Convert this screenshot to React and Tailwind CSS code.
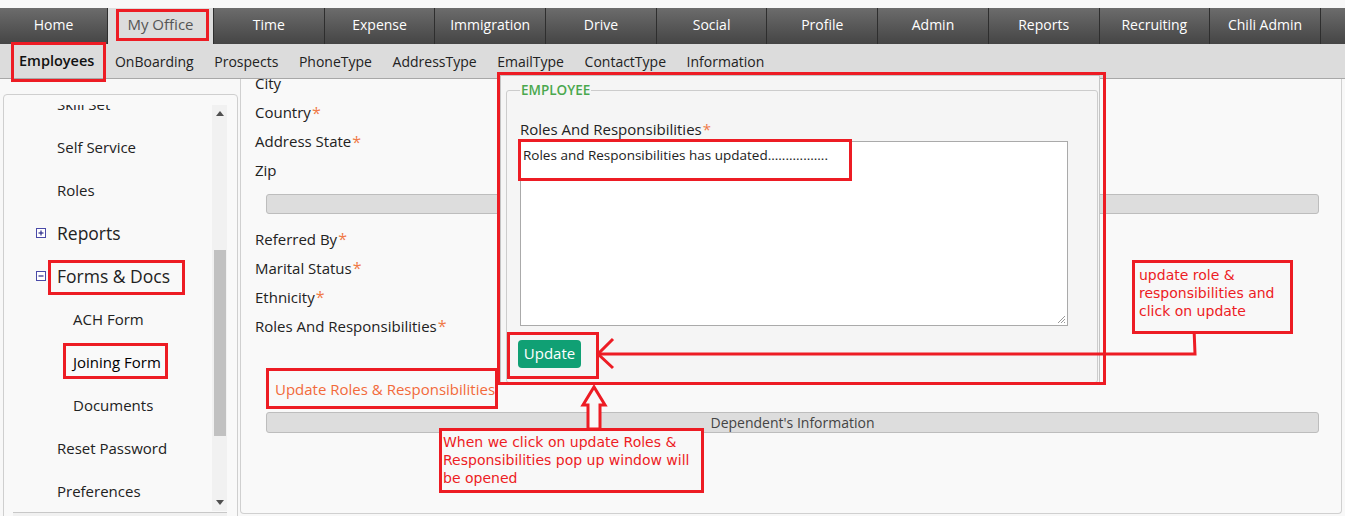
import React from "react";

const tabs = ["Time", "Expense", "Immigration", "Drive", "Social", "Profile", "Admin", "Reports", "Recruiting", "Chili Admin"];
const subs = ["OnBoarding", "Prospects", "PhoneType", "AddressType", "EmailType", "ContactType", "Information"];

function Label({ children, req }) {
  return (
    <div className="h-[29px] flex items-center text-[15px] text-[#222]">
      {children}
      {req && <span className="text-[#f07a48] ml-[1px] text-[16px] leading-none">*</span>}
    </div>
  );
}

function PlusMinus({ minus }) {
  return (
    <svg width="10" height="10" viewBox="0 0 10 10" className="mr-[11px]">
      <rect x="0.5" y="0.5" width="9" height="9" fill="#fff" stroke="#4a4aa8" />
      <line x1="2.5" y1="5" x2="7.5" y2="5" stroke="#2a2a8a" strokeWidth="1.2" />
      {!minus && <line x1="5" y1="2.5" x2="5" y2="7.5" stroke="#2a2a8a" strokeWidth="1.2" />}
    </svg>
  );
}

function SideItem({ children, level = 0, big, icon, active }) {
  const pad = level === 0 ? "pl-[53px]" : level === 1 ? "pl-[32px]" : "pl-[69px]";
  return (
    <div className={`h-[43px] flex items-center ${pad} ${big ? "text-[17.5px]" : "text-[15px]"} ${active ? "text-black" : "text-[#222]"}`}>
      {icon}
      {children}
    </div>
  );
}

function RedBox({ className }) {
  return <div className={`absolute border-[3px] border-[#ed1c24] ${className}`} />;
}

export default function App() {
  return (
    <div className="relative w-[1345px] h-[516px] overflow-hidden bg-[#f8f8f8] font-['Open_Sans',sans-serif]">
      {/* top nav */}
      <div className="pt-[8px]">
        <div className="flex h-[36px] bg-gradient-to-b from-[#6c6c6c] to-[#454545]">
          <div className="w-[108px] shrink-0 border-r border-[#2e2e2e] flex items-center justify-center pb-[3px] text-white text-[14px]">Home</div>
          <div className="w-[106px] shrink-0 border-r border-[#2e2e2e] bg-[#dcdcdc] flex items-center justify-center pb-[3px] text-[#555] text-[15px]">My Office</div>
          {tabs.map((t) => (
            <div key={t} className="w-[110.7px] shrink-0 border-r border-[#2e2e2e] flex items-center justify-center pb-[3px] text-white text-[14px]">{t}</div>
          ))}
        </div>
        {/* sub nav */}
        <div className="flex items-center h-[35px] bg-[#dcdcdc] border-b border-[#a8a8a8] pl-[19px] gap-[20.6px] text-[14px] text-[#222]">
          <span className="font-semibold text-[14.5px] text-[#111]">Employees</span>
          {subs.map((s) => (
            <span key={s}>{s}</span>
          ))}
        </div>
      </div>

      {/* body */}
      <div className="flex h-[437px]">
        {/* sidebar */}
        <div className="ml-[3px] mt-[15px] w-[235px] shrink-0 h-[440px] border border-[#cfcfcf] rounded-[4px] bg-[#f9f9f9] pt-[10px] pr-[10px] relative">
          <div className="flex h-[406px]">
            <div className="flex-1 overflow-hidden">
              <div className="mt-[-22.5px]">
                <SideItem>Skill Set</SideItem>
                <SideItem>Self Service</SideItem>
                <SideItem>Roles</SideItem>
                <SideItem big icon={<PlusMinus />} level={1}>Reports</SideItem>
                <SideItem big icon={<PlusMinus minus />} level={1}>Forms &amp; Docs</SideItem>
                <SideItem level={2}>ACH Form</SideItem>
                <SideItem level={2} active>Joining Form</SideItem>
                <SideItem level={2}>Documents</SideItem>
                <SideItem>Reset Password</SideItem>
                <SideItem>Preferences</SideItem>
              </div>
            </div>
            {/* scrollbar */}
            <div className="w-[15px] bg-[#f1f1f1] flex flex-col items-center">
              <div className="h-[17px] flex items-center justify-center">
                <svg width="8" height="5" viewBox="0 0 8 5"><path d="M0 5 L4 0 L8 5 Z" fill="#505050" /></svg>
              </div>
              <div className="h-[128px]" />
              <div className="w-[12px] h-[186px] bg-[#c1c1c1]" />
              <div className="flex-1" />
              <div className="h-[17px] flex items-center justify-center">
                <svg width="8" height="5" viewBox="0 0 8 5"><path d="M0 0 L4 5 L8 0 Z" fill="#505050" /></svg>
              </div>
            </div>
          </div>
          <div className="ml-[9px] mt-[1px] h-[12px] bg-[#f1f1f1] border-t border-[#c8c8c8]" />
        </div>

        {/* main panel */}
        <div className="ml-[2px] w-[1102px] h-[435px] border border-[#d0d0d0] border-t-0 rounded-b-[4px] bg-[#f9f9f9] overflow-hidden pl-[14px] pr-[22px]">
          <div className="mt-[-10px]">
            <Label>City</Label>
            <Label req>Country</Label>
            <Label req>Address State</Label>
            <Label>Zip</Label>
            <div className="ml-[11px] mt-[9px] h-[20px] bg-[#dddddd] border border-[#bdbdbd] rounded-[3px]" />
            <div className="mt-[10.5px]">
              <Label req>Referred By</Label>
              <Label req>Marital Status</Label>
              <Label req>Ethnicity</Label>
              <Label req>Roles And Responsibilities</Label>
            </div>
            <div className="mt-[34px] h-[29px] flex items-center pl-[20px] text-[15px] text-[#f26a3b]">Update Roles &amp; Responsibilities</div>
            <div className="ml-[11px] mt-[8px] h-[21px] bg-[#dddddd] border border-[#bdbdbd] rounded-[3px] flex items-center justify-center text-[14px] text-[#444]">Dependent's Information</div>
          </div>
        </div>
      </div>

      {/* popup window */}
      <div className="absolute left-[500px] top-[75px] w-[600px] h-[309px] bg-[#f5f5f5] border border-[#c4c4c4] pl-[5px] pr-[1px] pt-[5px]">
        <fieldset className="border border-[#cccccc] rounded-[3px] px-[13px] pb-[10px] h-[302px]">
          <legend className="px-[1px] text-[13.5px] leading-[18px] font-semibold text-[#4aa84e]">EMPLOYEE</legend>
          <div className="mt-[20px] text-[15px] leading-[20px] text-[#222]">
            Roles And Responsibilities<span className="text-[#f07a48] ml-[1px]">*</span>
          </div>
          <div className="mt-[2px] w-[548px] h-[185px] bg-white border border-[#aaaaaa] relative px-[2px] pt-[3px] text-[13.5px] text-[#222]">
            Roles and Responsibilities has updated.................
            <svg width="9" height="9" viewBox="0 0 9 9" className="absolute right-[1px] bottom-[1px]">
              <line x1="8" y1="1" x2="1" y2="8" stroke="#999" />
              <line x1="8" y1="4" x2="4" y2="8" stroke="#999" />
              <line x1="8" y1="7" x2="7" y2="8" stroke="#999" />
            </svg>
          </div>
          <button className="mt-[14px] ml-[-2px] w-[63px] h-[28px] rounded-[4px] bg-[#10a074] text-white text-[15px] flex items-center justify-center pb-[1px]">Update</button>
        </fieldset>
      </div>

      {/* annotation red boxes */}
      <RedBox className="left-[116px] top-[9px] w-[93px] h-[32px]" />
      <RedBox className="left-[11px] top-[42px] w-[95px] h-[40px]" />
      <RedBox className="left-[48px] top-[260px] w-[137px] h-[35px]" />
      <RedBox className="left-[63px] top-[343px] w-[105px] h-[36px]" />
      <RedBox className="left-[266px] top-[368px] w-[232px] h-[41px]" />
      <RedBox className="left-[497px] top-[72px] w-[609px] h-[313px]" />
      <RedBox className="left-[518px] top-[139px] w-[334px] h-[42px]" />
      <RedBox className="left-[507px] top-[332px] w-[92px] h-[47px]" />

      {/* arrows */}
      <svg className="absolute inset-0 pointer-events-none" width="1345" height="516" viewBox="0 0 1345 516">
        <polyline points="1194,328 1195,354 599,354" fill="none" stroke="#ed1c24" strokeWidth="3" />
        <polyline points="613,339 598,354 613,368" fill="none" stroke="#ed1c24" strokeWidth="3" />
        <polygon points="588,429 588,405 583,405 594,387 605,405 600,405 600,429" fill="#f8f8f8" stroke="#ed1c24" strokeWidth="3" />
      </svg>

      {/* annotation text boxes */}
      <div className="absolute left-[1132px] top-[260px] w-[161px] h-[74px] border-[3px] border-[#ed1c24] bg-[#f8f8f8] pl-[4px] pt-[3px] font-['DejaVu_Sans',sans-serif] text-[14px] leading-[18px] text-[#ed1c24]">
        update role &amp; responsibilities and click on update
      </div>
      <div className="absolute left-[439px] top-[428px] w-[265px] h-[65px] border-[3px] border-[#ed1c24] bg-[#f8f8f8] pl-[1px] pt-[2px] font-['DejaVu_Sans',sans-serif] text-[14px] leading-[18px] text-[#ed1c24]">
        When we click on update Roles &amp; Responsibilities pop up window will be opened
      </div>
    </div>
  );
}
